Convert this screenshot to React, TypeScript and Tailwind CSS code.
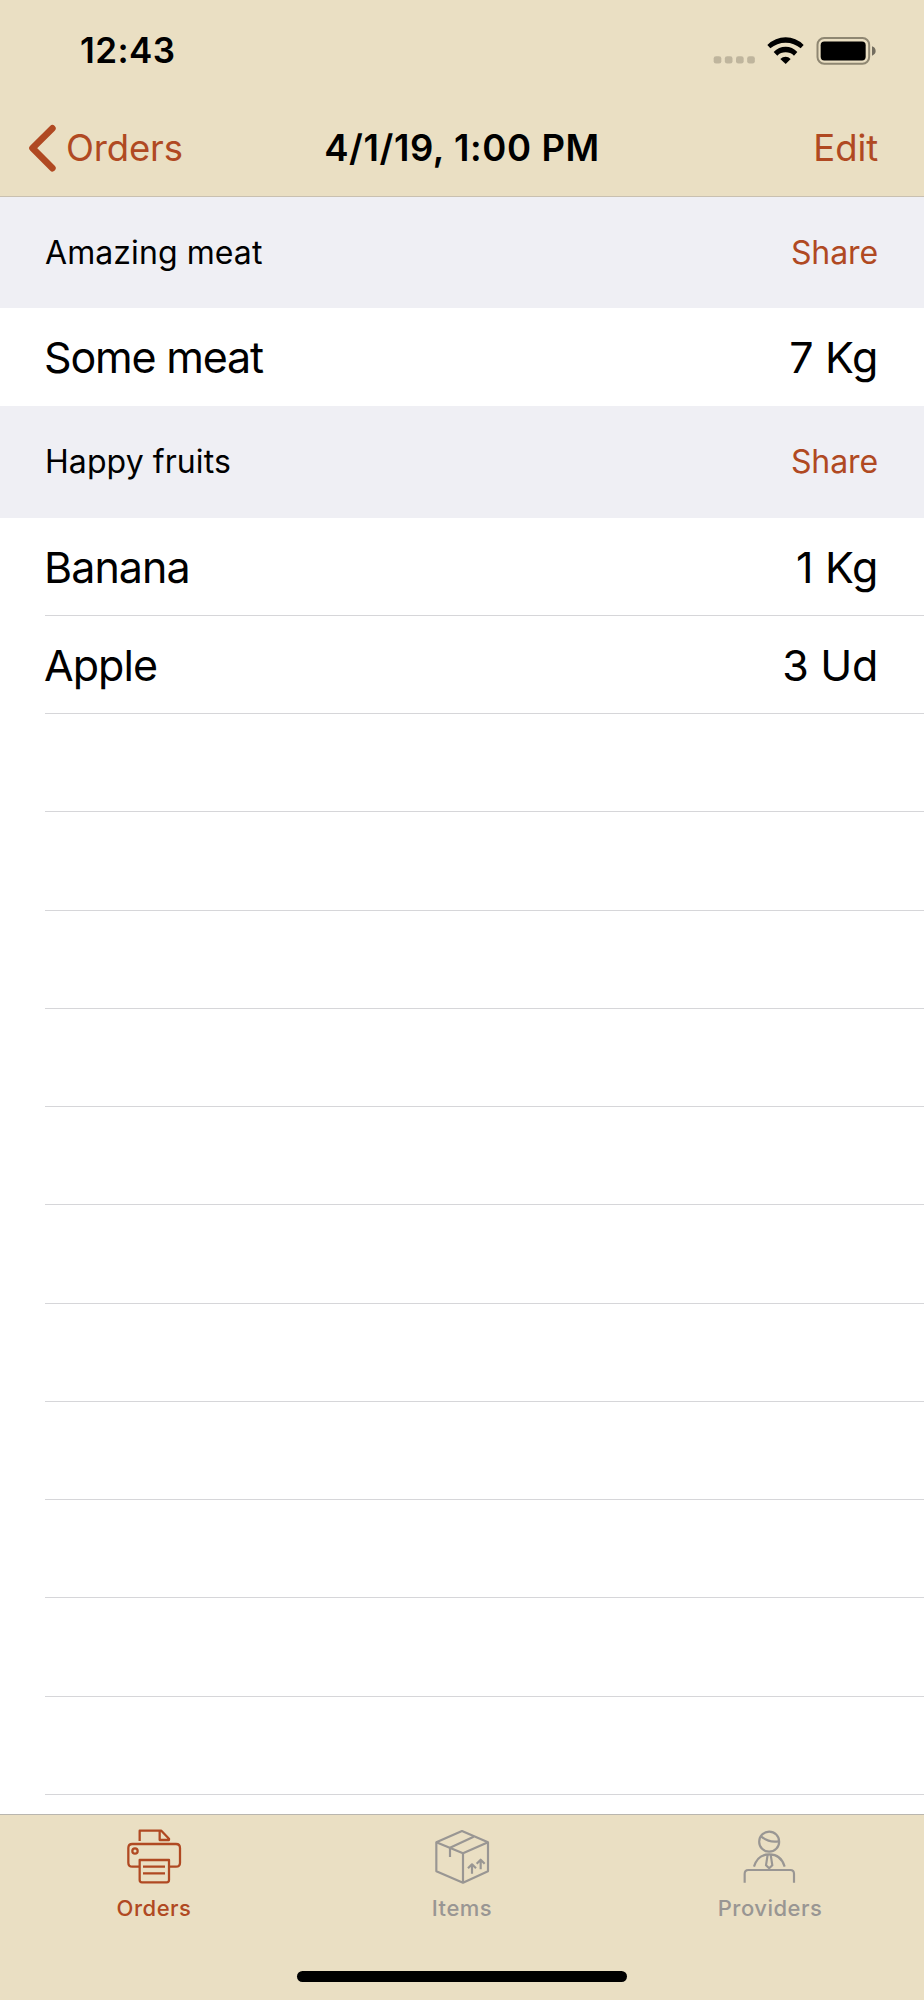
import React from "react";

type Item = { name: string; amount: string };

function StatusBar() {
  return (
    <div className="flex h-[98px] items-center justify-between pt-[3px] pr-[47px] pl-[80px]">
      <span className="text-[35px] font-semibold leading-none tracking-[0.4px] text-black">12:43</span>
      <svg className="h-[34px] w-[164px]" viewBox="70 40 492 102">
        <g fill="#bfb59d">
          <rect x="72" y="106.500" width="23" height="22" rx="7" />
          <rect x="105.500" y="106.500" width="23" height="22" rx="7" />
          <rect x="139" y="106.500" width="23" height="22" rx="7" />
          <rect x="172.500" y="106.500" width="23" height="22" rx="7" />
        </g>
        <g fill="#000">
          <path d="M233 73 Q257 50 288 50 Q319 50 342 73 L333 83 Q313 66 288 66 Q262 66 242 83 Z" />
          <path d="M252 94 Q267 78 288 78 Q308 78 323 94 L313 105 Q302 95 288 95 Q273 95 263 105 Z" />
          <path d="M272 115 Q279 108 288 108 Q296 108 303 115 L288 130 Z" />
        </g>
        <rect x="383.500" y="52" width="155" height="77" rx="20" fill="none" stroke="#8f8772" strokeWidth="6" />
        <rect x="393" y="62.500" width="135" height="57" rx="11" fill="#000" />
        <path d="M547 77 Q558 81 558 91 Q558 101 547 105 Z" fill="#736d5f" />
      </svg>
    </div>
  );
}

function NavBar() {
  return (
    <div className="grid h-[98px] grid-cols-[1fr_auto_1fr] items-center px-[27px] pt-px text-[36.500px] leading-none">
      <div className="flex items-center text-[#b04922]">
        <svg className="h-[50px] w-[32px] shrink-0" viewBox="0 0 32 50" fill="none" stroke="currentColor" strokeWidth="6.600" strokeLinecap="round" strokeLinejoin="round">
          <path d="M25.400 5.300 L5.500 25.200 L25.400 45.200" />
        </svg>
        <span className="ml-[7px] pt-[2px] tracking-[-0.15px]">Orders</span>
      </div>
      <h1 className="pt-[2px] font-semibold tracking-[0.580px] text-black">4/1/19, 1:00 PM</h1>
      <span className="mr-[19px] justify-self-end pt-[2px] tracking-[-0.1px] text-[#b04922]">Edit</span>
    </div>
  );
}

function SectionHeader({ title }: { title: string }) {
  return (
    <div className="flex h-[111.200px] shrink-0 items-center justify-between bg-[#efeff4] pt-[0.600px] pr-[46px] pl-[45px] text-[32px] leading-none">
      <span className="tracking-[0.080px] text-black">{title}</span>
      <span className="tracking-[-0.1px] text-[#b04922]">Share</span>
    </div>
  );
}

function Row({ item, separator = true }: { item?: Item; separator?: boolean }) {
  return (
    <div className="h-[98.250px] shrink-0 pl-[45px]">
      <div className={separator ? "flex h-full items-center justify-between border-b border-[#d6d6d9] pt-[2px] pr-[46px]" : "flex h-full items-center justify-between pr-[46px]"}>
        <span className={separator ? "-ml-px text-[43px] leading-none tracking-[-0.95px]" : "-ml-px text-[43px] leading-none tracking-[-1.2px]"}>{item?.name}</span>
        <span className="text-[43px] leading-none tracking-[-0.3px]">{item?.amount}</span>
      </div>
    </div>
  );
}

function PrinterIcon() {
  return (
    <svg className="size-[60px]" viewBox="102 142 180 180" fill="none" stroke="currentColor" strokeWidth="6.800" strokeLinejoin="round">
      <path d="M149 184 V153 H214 L237 177 V181 H209 V153" />
      <path d="M148 261 H127 Q115 261 115 249 V205 Q115 193 127 193 H258 Q270 193 270 205 V249 Q270 261 258 261 H238" />
      <circle cx="135" cy="214" r="8" />
      <path d="M149 241 H237 V301 Q237 308 230 308 H156 Q149 308 149 301 Z" />
      <path d="M159 261 H225 M159 281 H225" />
    </svg>
  );
}

function BoxIcon() {
  return (
    <svg className="size-[60px]" viewBox="96 141 180 180" fill="none" stroke="currentColor" strokeWidth="6.500" strokeLinejoin="round">
      <path d="M109 187 L186 153 L264 187 V274 L189 308 L109 274 Z" />
      <path d="M109 187 L189 220 L264 187 M189 220 V308" />
      <path d="M221 170 L150 203 V231" />
      <path d="M216 281 V254 M204 265 L216 253 L228 265 M242 268 V240 M230 251 L242 239 L254 251" />
    </svg>
  );
}

function PersonIcon() {
  return (
    <svg className="size-[60px]" viewBox="120 141 180 180" fill="none" stroke="currentColor" strokeWidth="6.500" strokeLinejoin="round">
      <circle cx="207.500" cy="185" r="30" />
      <path d="M184 170 Q207 189 236 184" />
      <path d="M162 260 C169 236 185 223 208 223 C231 223 247 236 254 260" />
      <path d="M203 224 L198 256 L207.500 265 L217 256 L212 224" />
      <path d="M134 308 V281 Q134 270 145 270 H271 Q282 270 282 281 V308" />
    </svg>
  );
}

function Tab({ label, active = false, children }: { label: string; active?: boolean; children: React.ReactNode }) {
  return (
    <div className={active ? "flex flex-1 flex-col items-center pt-[12px] text-[#b04922]" : "flex flex-1 flex-col items-center pt-[12px] text-[#999693]"}>
      {children}
      <span className="mt-[10px] text-[22px] font-medium leading-[22px] tracking-[0.5px]">{label}</span>
    </div>
  );
}

const fruits: Item[] = [
  { name: "Banana", amount: "1 Kg" },
  { name: "Apple", amount: "3 Ud" },
];

export default function App() {
  return (
    <div className="flex h-[2000px] w-[924px] flex-col overflow-hidden bg-white font-['Inter',sans-serif] text-black">
      <header className="h-[197px] shrink-0 border-b border-[#c9c0b0] bg-[#eadfc3]">
        <StatusBar />
        <NavBar />
      </header>
      <main className="flex min-h-0 flex-1 flex-col overflow-hidden">
        <SectionHeader title="Amazing meat" />
        <Row item={{ name: "Some meat", amount: "7 Kg" }} separator={false} />
        <SectionHeader title="Happy fruits" />
        {fruits.map((f) => (
          <Row key={f.name} item={f} />
        ))}
        {Array.from({ length: 11 }, (_, i) => (
          <Row key={i} />
        ))}
      </main>
      <footer className="flex h-[186px] shrink-0 flex-col border-t border-[#b9b6af] bg-[#eadfc3]">
        <nav className="flex">
          <Tab label="Orders" active><PrinterIcon /></Tab>
          <Tab label="Items"><BoxIcon /></Tab>
          <Tab label="Providers"><PersonIcon /></Tab>
        </nav>
        <div className="mx-auto mt-auto mb-[18px] h-[11px] w-[330px] rounded-full bg-black" />
      </footer>
    </div>
  );
}
